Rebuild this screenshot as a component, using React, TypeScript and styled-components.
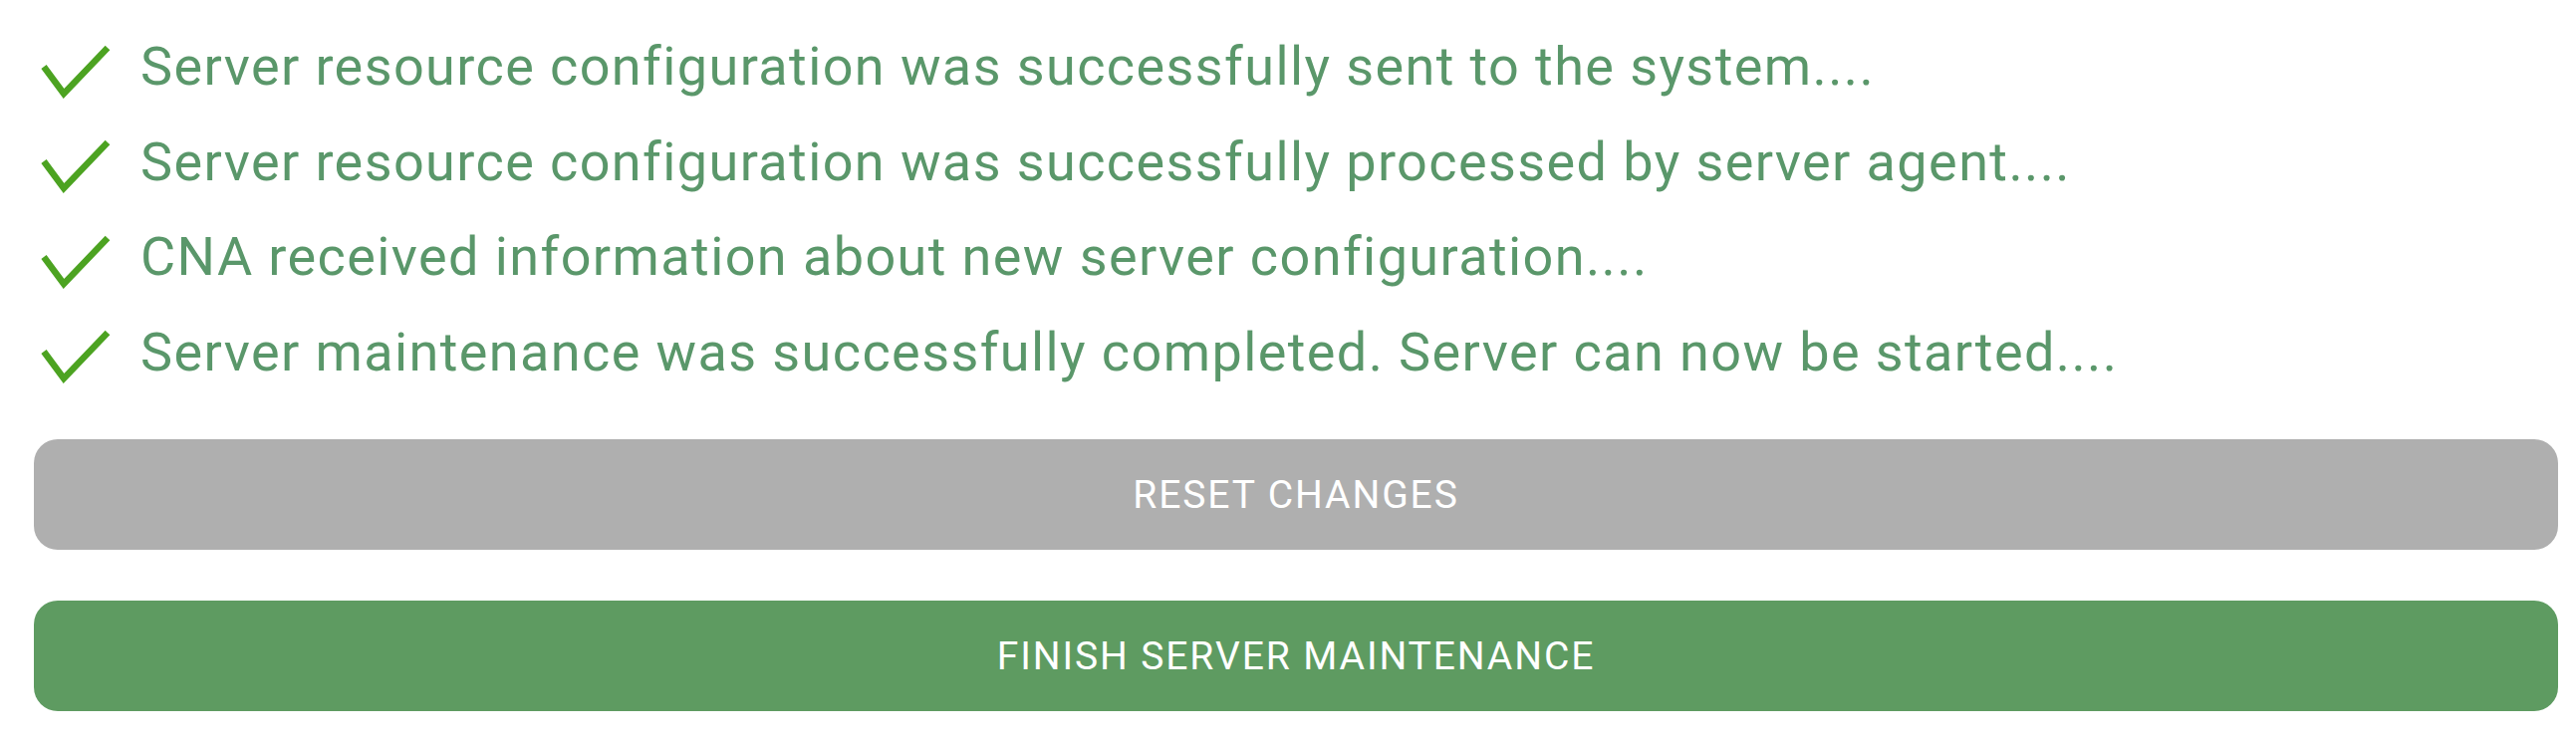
import React from "react";
import styled, { createGlobalStyle } from "styled-components";

const GlobalStyle = createGlobalStyle`
  html, body {
    margin: 0;
    padding: 0;
    background: #ffffff;
  }
  body {
    font-family: Roboto, "Liberation Sans", Arial, sans-serif;
  }
`;

const Page = styled.div`
  display: flex;
  flex-direction: column;
  padding: 19px 18px 0 34px;
  width: 2586px;
  box-sizing: border-box;
`;

const StatusList = styled.ul`
  list-style: none;
  margin: 0;
  padding: 0;
  display: flex;
  flex-direction: column;
`;

const StatusRow = styled.li`
  display: flex;
  align-items: center;
  height: 95.5px;
  padding-left: 7px;
`;

const CheckIcon = styled.svg`
  flex: 0 0 auto;
  width: 70px;
  height: 54px;
  margin-top: 10px;
  margin-right: 30px;
`;

const StatusText = styled.span`
  font-family: Roboto, "Liberation Sans", Arial, sans-serif;
  font-size: 54px;
  line-height: 1.13;
  letter-spacing: 1.4px;
  color: #5a976a;
  white-space: nowrap;
`;

const Actions = styled.div`
  display: flex;
  flex-direction: column;
  gap: 51px;
  margin-top: 40px;
`;

const ActionButton = styled.button<{ $tone: "gray" | "green" }>`
  display: flex;
  align-items: center;
  justify-content: center;
  width: 100%;
  height: 111px;
  border: none;
  border-radius: 24px;
  background: ${(p) => (p.$tone === "gray" ? "#afafaf" : "#5e9b61")};
  color: #ffffff;
  font-family: Roboto, "Liberation Sans", Arial, sans-serif;
  font-size: 39px;
  font-weight: 400;
  letter-spacing: 1.9px;
  text-transform: uppercase;
  cursor: pointer;
  padding: 0;
`;

const Check = () => (
  <CheckIcon viewBox="0 0 70 54" aria-hidden="true">
    <polyline
      points="3,22 23,49 67,3"
      fill="none"
      stroke="#4ca321"
      strokeWidth="6.5"
      strokeLinejoin="miter"
      strokeLinecap="butt"
    />
  </CheckIcon>
);

const messages = [
  "Server resource configuration was successfully sent to the system....",
  "Server resource configuration was successfully processed by server agent....",
  "CNA received information about new server configuration....",
  "Server maintenance was successfully completed. Server can now be started....",
];

export default function App() {
  return (
    <>
      <GlobalStyle />
      <Page>
        <StatusList>
          {messages.map((m) => (
            <StatusRow key={m}>
              <Check />
              <StatusText>{m}</StatusText>
            </StatusRow>
          ))}
        </StatusList>
        <Actions>
          <ActionButton $tone="gray">Reset changes</ActionButton>
          <ActionButton $tone="green">Finish server maintenance</ActionButton>
        </Actions>
      </Page>
    </>
  );
}
